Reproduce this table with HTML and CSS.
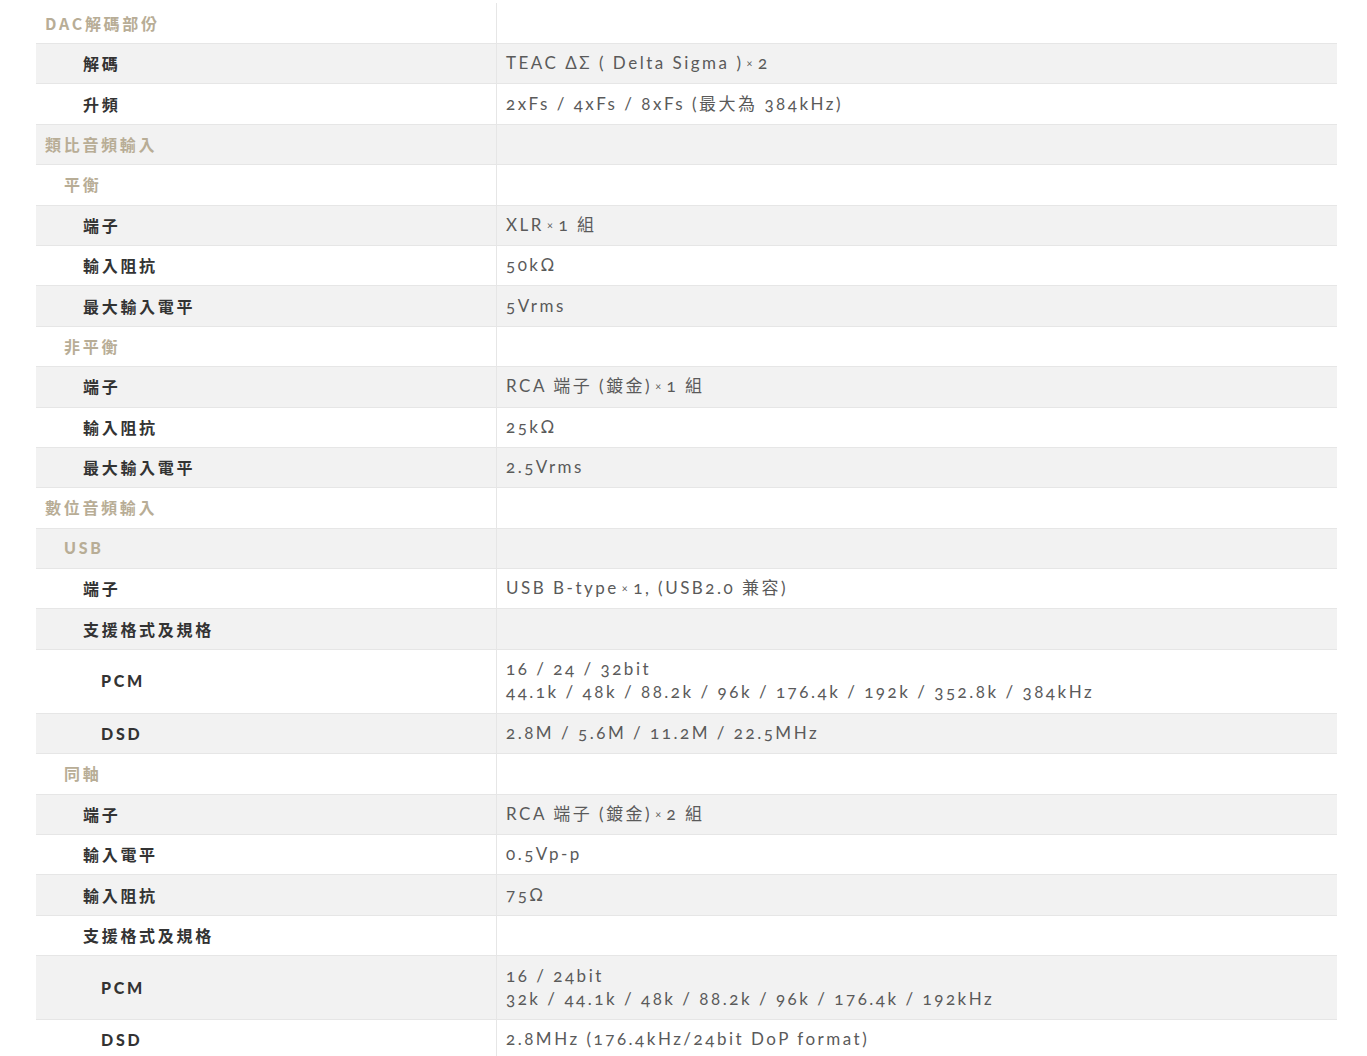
FILE: index.html
```html
<!DOCTYPE html>
<html lang="zh-Hant">
<head>
<meta charset="utf-8">
<title>規格</title>
<link rel="stylesheet" href="styles.css">
</head>
<body>
<div class="spec">
  <div class="row"><div class="k l1">DAC解碼部份</div><div class="v"></div></div>
  <div class="row"><div class="k l3">解碼</div><div class="v">TEAC ΔΣ ( Delta Sigma ) <span class="x">×</span> 2</div></div>
  <div class="row"><div class="k l3">升頻</div><div class="v">2xFs / 4xFs / 8xFs (最大為 384kHz)</div></div>
  <div class="row"><div class="k l1">類比音頻輸入</div><div class="v"></div></div>
  <div class="row"><div class="k l2">平衡</div><div class="v"></div></div>
  <div class="row"><div class="k l3">端子</div><div class="v">XLR <span class="x">×</span> 1 組</div></div>
  <div class="row"><div class="k l3">輸入阻抗</div><div class="v">50kΩ</div></div>
  <div class="row"><div class="k l3">最大輸入電平</div><div class="v">5Vrms</div></div>
  <div class="row"><div class="k l2">非平衡</div><div class="v"></div></div>
  <div class="row"><div class="k l3">端子</div><div class="v">RCA 端子 (鍍金) <span class="x">×</span> 1 組</div></div>
  <div class="row"><div class="k l3">輸入阻抗</div><div class="v">25kΩ</div></div>
  <div class="row"><div class="k l3">最大輸入電平</div><div class="v">2.5Vrms</div></div>
  <div class="row"><div class="k l1">數位音頻輸入</div><div class="v"></div></div>
  <div class="row"><div class="k l2 lat">USB</div><div class="v"></div></div>
  <div class="row"><div class="k l3">端子</div><div class="v">USB B-type <span class="x">×</span> 1, (USB2.0 兼容)</div></div>
  <div class="row"><div class="k l3">支援格式及規格</div><div class="v"></div></div>
  <div class="row tall"><div class="k l4 lat">PCM</div><div class="v">16 / 24 / 32bit<br>44.1k / 48k / 88.2k / 96k / 176.4k / 192k / 352.8k / 384kHz</div></div>
  <div class="row"><div class="k l4 lat">DSD</div><div class="v">2.8M / 5.6M / 11.2M / 22.5MHz</div></div>
  <div class="row"><div class="k l2">同軸</div><div class="v"></div></div>
  <div class="row"><div class="k l3">端子</div><div class="v">RCA 端子 (鍍金) <span class="x">×</span> 2 組</div></div>
  <div class="row"><div class="k l3">輸入電平</div><div class="v">0.5Vp-p</div></div>
  <div class="row"><div class="k l3">輸入阻抗</div><div class="v">75Ω</div></div>
  <div class="row"><div class="k l3">支援格式及規格</div><div class="v"></div></div>
  <div class="row tall"><div class="k l4 lat">PCM</div><div class="v">16 / 24bit<br>32k / 44.1k / 48k / 88.2k / 96k / 176.4k / 192kHz</div></div>
  <div class="row"><div class="k l4 lat">DSD</div><div class="v">2.8MHz (176.4kHz/24bit DoP format)</div></div>
</div>
</body>
</html>
```

FILE: styles.css
```css
html, body {
  margin: 0;
  padding: 0;
  background: #ffffff;
}
body {
  font-family: Lato, "Noto Sans CJK TC", sans-serif;
  color: #555555;
}
.spec {
  margin: 3px 30px 0 36px;
  width: 1301px;
}
.row {
  display: grid;
  grid-template-columns: 461px 1fr;
  min-height: 40.4px;
  box-sizing: border-box;
  border-top: 1px solid #e6e6e6;
}
.row:first-child {
  border-top: none;
  min-height: 40px;
}
.row:nth-child(even) {
  background: #f2f2f2;
}
.row.tall {
  min-height: 64px;
}
.k {
  display: flex;
  align-items: center;
  padding-bottom: 1px;
  font-family: "Noto Sans CJK TC", Lato, sans-serif;
  font-weight: 700;
  font-size: 16px;
  letter-spacing: 2.7px;
  color: #333333;
  border-right: 1px solid #e6e6e6;
}
.l1 { padding-left: 9px; color: #b8ad96; }
.l2 { padding-left: 28px; color: #b8ad96; }
.l3 { padding-left: 47px; }
.l4 { padding-left: 65px; }
.lat {
  font-family: Lato, sans-serif;
  font-weight: 900;
  letter-spacing: 2.7px;
}
.v {
  display: flex;
  align-items: center;
  padding: 5px 9px 7px;
  font-size: 17px;
  line-height: 23px;
  letter-spacing: 2.5px;
  color: #5a5a5a;
  font-weight: 400;
  font-variant-numeric: oldstyle-nums;
}
.v .x {
  font-size: 11px;
  margin: 0 3px;
}
```
